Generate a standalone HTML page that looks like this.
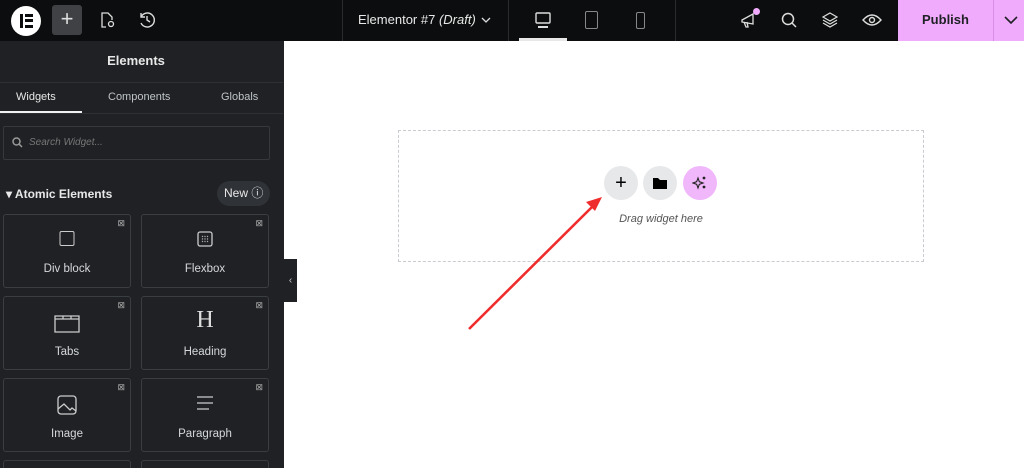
<!DOCTYPE html><html style="overflow:hidden;width:1024px;height:468px"><head><style>
*{box-sizing:border-box;margin:0;padding:0}
body{width:1024px;height:468px;overflow:hidden;background:#fff;font-family:"Liberation Sans",sans-serif;position:relative}
.wrap{position:absolute;left:0;top:0;width:1024px;height:468px;overflow:hidden}
.top{position:absolute;left:0;top:0;width:1024px;height:41px;background:#0c0d0e}
.abs{position:absolute}
.panel{position:absolute;left:0;top:41px;width:284px;height:427px;background:#1f2124}
.card{position:absolute;width:128px;height:74px;border:1px solid #3a3d41;border-radius:3px;color:#d5d8dc;font-size:11.5px;text-align:center;background:#1f2124}
.card .lb{position:absolute;left:0;right:0;top:48px}
.card .ic{position:absolute;left:50%;top:16px;transform:translateX(-50%)}
.card .x{position:absolute;right:5px;top:3px;font-size:9px;color:#aaa}
.circ{position:absolute;width:34px;height:34px;border-radius:50%;background:#e6e8ea;top:166px}
</style></head><body><div class="wrap">
<div class="top">
 <div class="abs" style="left:11px;top:6px;width:30px;height:30px;border-radius:50%;background:#fff"></div>
 <div class="abs" style="left:20px;top:14px;width:3px;height:14px;background:#0c0d0e"></div>
 <div class="abs" style="left:25px;top:14px;width:8px;height:3px;background:#0c0d0e;box-shadow:0 5px 0 #0c0d0e,0 11px 0 #0c0d0e"></div>
 <div class="abs" style="left:52px;top:5px;width:30px;height:30px;border-radius:3px;background:#3f4145;color:#ddd;font-size:22px;text-align:center;line-height:28px">+</div>
 <svg class="abs" style="left:97px;top:10px" width="20" height="20" viewBox="0 0 20 20" fill="none" stroke="#ddd" stroke-width="1.3"><path d="M9 17H5V3h6l4 4v3"/><circle cx="14" cy="14" r="2.5"/></svg>
 <svg class="abs" style="left:137px;top:10px" width="20" height="20" viewBox="0 0 20 20" fill="none" stroke="#ddd" stroke-width="1.4"><path d="M4 7a7 7 0 1 1 0 6M4 3v4h4M10 6v4l3 2"/></svg>
 <div class="abs" style="left:342px;top:0;width:1px;height:41px;background:#2a2c30"></div>
 <div class="abs" style="left:358px;top:12px;color:#e8e8e8;font-size:13px">Elementor #7 <i>(Draft)</i></div>
 <svg class="abs" style="left:481px;top:16px" width="10" height="8"><path d="M1 2l4 4 4-4" stroke="#ddd" fill="none" stroke-width="1.3"/></svg>
 <div class="abs" style="left:508px;top:0;width:1px;height:41px;background:#2a2c30"></div>
 <div class="abs" style="left:675px;top:0;width:1px;height:41px;background:#2a2c30"></div>
 <svg class="abs" style="left:534px;top:11px" width="18" height="18" fill="none" stroke="#ddd" stroke-width="1.4"><rect x="2" y="2" width="14" height="10" rx="1"/><path d="M4 16h10" stroke-width="2"/></svg>
 <div class="abs" style="left:519px;top:38px;width:48px;height:3px;background:#e8e8e8"></div>
 <div class="abs" style="left:585px;top:11px;width:13px;height:18px;border:1.4px solid #888;border-radius:2px"></div>
 <div class="abs" style="left:636px;top:12px;width:9px;height:17px;border:1.4px solid #888;border-radius:2px"></div>
 <svg class="abs" style="left:740px;top:11px" width="18" height="18" fill="none" stroke="#ddd" stroke-width="1.3"><path d="M2 9l11-6v10L2 11zM4 11l2 5h2l-1-5"/></svg>
 <div class="abs" style="left:753px;top:8px;width:7px;height:7px;border-radius:50%;background:#f0abfc"></div>
 <svg class="abs" style="left:780px;top:11px" width="18" height="18" fill="none" stroke="#ddd" stroke-width="1.5"><circle cx="8" cy="8" r="5.5"/><path d="M12 12l4 4"/></svg>
 <svg class="abs" style="left:821px;top:11px" width="18" height="18" fill="none" stroke="#ddd" stroke-width="1.2"><path d="M9 2l7 4-7 4-7-4zM2 9l7 4 7-4M2 12l7 4 7-4"/></svg>
 <svg class="abs" style="left:862px;top:12px" width="20" height="16" fill="none" stroke="#ddd" stroke-width="1.4"><path d="M1 8q9-10 18 0q-9 10-18 0z"/><circle cx="10" cy="8" r="2.5"/></svg>
 <div class="abs" style="left:898px;top:0;width:126px;height:41px;background:#f0abfc"></div>
 <div class="abs" style="left:993px;top:0;width:1px;height:41px;background:#d98ee6"></div>
 <div class="abs" style="left:898px;top:12px;width:95px;text-align:center;font-size:13px;font-weight:bold;color:#1f2124">Publish</div>
 <svg class="abs" style="left:1004px;top:16px" width="14" height="9"><path d="M1 1l6 6 6-6" stroke="#1f2124" fill="none" stroke-width="1.6"/></svg>
</div>
<div class="panel">
 <div class="abs" style="left:0;top:12px;width:272px;text-align:center;color:#e8e8e8;font-weight:bold;font-size:13px">Elements</div>
 <div class="abs" style="left:0;top:41px;width:283px;height:1px;background:#2d3035"></div>
 <div class="abs" style="left:16px;top:50px;color:#e8e8e8;font-size:11px">Widgets</div>
 <div class="abs" style="left:108px;top:50px;color:#c0c4c8;font-size:11px">Components</div>
 <div class="abs" style="left:221px;top:50px;color:#c0c4c8;font-size:11px">Globals</div>
 <div class="abs" style="left:0;top:70px;width:82px;height:2px;background:#f0f0f0"></div>
 <div class="abs" style="left:0;top:72px;width:283px;height:1px;background:#2d3035"></div>
 <div class="abs" style="left:3px;top:85px;width:267px;height:34px;border:1px solid #35383c;border-radius:2px"></div>
 <svg class="abs" style="left:12px;top:96px" width="11" height="11" fill="none" stroke="#999" stroke-width="1.5"><circle cx="4.5" cy="4.5" r="3.5"/><path d="M7 7l3 3"/></svg>
 <div class="abs" style="left:29px;top:96px;color:#777;font-size:10px;font-style:italic">Search Widget...</div>
 <div class="abs" style="left:6px;top:146px;color:#e8e8e8;font-size:12px;font-weight:bold">▾ Atomic Elements</div>
 <div class="abs" style="left:217px;top:140px;width:53px;height:25px;border-radius:13px;background:#2f3236;color:#e8e8e8;font-size:12px;line-height:25px;padding-left:7px">New ⓘ</div>
</div>
<div class="card" style="left:3px;top:214px"><span class="x">⊠</span><div class="ic" style="width:15px;height:15px;border:1.4px solid #ccc;border-radius:2px"></div><div class="lb">Div block</div></div>
<div class="card" style="left:141px;top:214px"><span class="x">⊠</span><svg class="ic" width="16" height="16" fill="none" stroke="#ccc" stroke-width="1.3"><rect x="1" y="1" width="14" height="14" rx="2"/><g fill="#aaa" stroke="none"><circle cx="5.5" cy="5.5" r=".7"/><circle cx="8" cy="5.5" r=".7"/><circle cx="10.5" cy="5.5" r=".7"/><circle cx="5.5" cy="8" r=".7"/><circle cx="8" cy="8" r=".7"/><circle cx="10.5" cy="8" r=".7"/><circle cx="5.5" cy="10.5" r=".7"/><circle cx="8" cy="10.5" r=".7"/><circle cx="10.5" cy="10.5" r=".7"/></g></svg><div class="lb">Flexbox</div></div>
<div class="card" style="left:3px;top:296px"><span class="x">⊠</span><svg class="ic" width="26" height="20" fill="none" stroke="#ccc" stroke-width="1.3"><path d="M1 3h24v16H1zM1 6h24M9 3v3M17 3v3"/></svg><div class="lb" style="top:49px">Tabs</div></div>
<div class="card" style="left:141px;top:296px"><span class="x">⊠</span><div class="ic" style="top:10px;font-family:'Liberation Serif',serif;font-size:24px;color:#ddd">H</div><div class="lb" style="top:49px">Heading</div></div>
<div class="card" style="left:3px;top:378px"><span class="x">⊠</span><svg class="ic" width="20" height="20" fill="none" stroke="#ccc" stroke-width="1.3"><rect x="1" y="1" width="18" height="18" rx="3"/><path d="M1 14l6-5 6 6 2-2 4 3"/></svg><div class="lb" style="top:49px">Image</div></div>
<div class="card" style="left:141px;top:378px"><span class="x">⊠</span><svg class="ic" width="18" height="16" stroke="#ccc" stroke-width="1.3"><path d="M1 2h16M1 8h16M1 14h12"/></svg><div class="lb" style="top:49px">Paragraph</div></div>
<div class="card" style="left:3px;top:460px;height:8px;border-bottom:none;border-radius:3px 3px 0 0"></div>
<div class="card" style="left:141px;top:460px;height:8px;border-bottom:none;border-radius:3px 3px 0 0"></div>
<div class="abs" style="left:284px;top:259px;width:13px;height:43px;background:#1f2124;color:#ccc;font-size:10px;line-height:43px;text-align:center">‹</div>
<div class="abs" style="left:398px;top:130px;width:526px;height:132px;border:1px dashed #c8ccd0"></div>
<div class="circ" style="left:604px;line-height:34px;text-align:center;font-size:20px;color:#000">+</div>
<div class="circ" style="left:643px"><svg style="position:absolute;left:10px;top:11px" width="14" height="12"><path d="M0 1h5l2 2h7v9H0z" fill="#000"/></svg></div>
<div class="circ" style="left:683px;background:#f0b7fa"><svg style="position:absolute;left:9px;top:9px" width="16" height="16" fill="#222"><path d="M6 3l1.3 3.7L11 8l-3.7 1.3L6 13 4.7 9.3 1 8l3.7-1.3z" fill="none" stroke="#222" stroke-width="1.1"/><circle cx="12" cy="3" r="1.4"/><circle cx="12" cy="12" r="1.4"/></svg></div>
<div class="abs" style="left:604px;top:213px;width:114px;text-align:center;font-size:11px;font-style:italic;color:#555">Drag widget here</div>
<svg class="abs" style="left:0;top:0" width="1024" height="468"><line x1="469" y1="329" x2="592" y2="207" stroke="#f02d2d" stroke-width="2.6"/><path d="M602 197l-16 5 9 9z" fill="#f02d2d"/></svg>
</div></body></html>
